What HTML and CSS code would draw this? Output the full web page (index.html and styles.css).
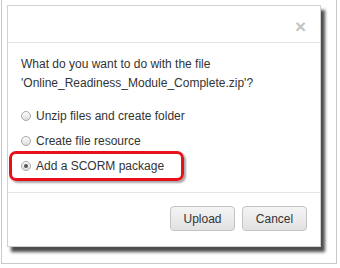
FILE: index.html
```html
<!DOCTYPE html>
<html lang="en">
<head>
  <meta charset="UTF-8">
  <title>Upload file</title>
  <link rel="stylesheet" href="styles.css">
</head>
<body>

  <div class="frame">
    <div class="dialog">
      <div class="dialog-header">
        <span class="close">&times;</span>
      </div>
      <div class="dialog-body">
        <p class="question">What do you want to do with the file<br>'Online_Readiness_Module_Complete.zip'?</p>
        <div class="options">
          <label class="option"><span class="radio"></span>Unzip files and create folder</label>
          <label class="option"><span class="radio"></span>Create file resource</label>
          <label class="option highlighted"><span class="radio checked"></span>Add a SCORM package</label>
        </div>
      </div>
      <div class="dialog-footer">
        <button>Upload</button>
        <button>Cancel</button>
      </div>
    </div>
  </div>

</body>
</html>
```

FILE: styles.css
```css
body {
  margin: 0;
  background: #fff;
  font-family: "Liberation Sans", Arial, sans-serif;
  font-size: 12px;
  color: #333;
}
.frame {
  margin-left: 1px;
  width: 336px;
  height: 264px;
  border: 1px solid #c9c9c9;
  border-top: none;
  padding: 5px 0 0 5px;
  box-sizing: border-box;
  background: #fff;
}
.dialog {
  width: 314px;
  height: 242px;
  box-sizing: border-box;
  border: 1px solid #d0d0d0;
  background: #fff;
  box-shadow: 4px 5px 3px rgba(0,0,0,0.7);
  display: flex;
  flex-direction: column;
}
.dialog-header {
  height: 37px;
  border-bottom: 1px solid #e5e5e5;
  display: flex;
  justify-content: flex-end;
  align-items: center;
  padding: 4px 14px 0 0;
  box-sizing: border-box;
}
.close {
  font-size: 19px;
  font-weight: bold;
  color: #c4c4c4;
  line-height: 1;
}
.dialog-body {
  height: 150px;
  border-bottom: 1px solid #e5e5e5;
  padding: 12px 13px 0;
  box-sizing: border-box;
}
.question {
  margin: 0;
  line-height: 19px;
  font-size: 12px;
}
.options {
  margin-top: 10px;
  display: flex;
  flex-direction: column;
}
.option {
  position: relative;
  height: 25px;
  display: flex;
  align-items: center;
  gap: 5px;
  font-size: 12px;
}
.radio {
  width: 10px;
  height: 10px;
  border: 1px solid #a8a8a8;
  border-radius: 50%;
  box-sizing: border-box;
  background: linear-gradient(#fdfdfd, #dcdcdc);
  display: flex;
  align-items: center;
  justify-content: center;
}
.radio.checked::after {
  content: "";
  width: 4px;
  height: 4px;
  border-radius: 50%;
  background: #555;
}
.highlighted::before {
  content: "";
  position: absolute;
  left: -12px;
  top: -2px;
  width: 175px;
  height: 30px;
  box-sizing: border-box;
  border: 3px solid #e8101a;
  border-radius: 7px;
  box-shadow: 2px 2px 2px rgba(0,0,0,0.35);
}
.dialog-footer {
  flex: 1;
  display: flex;
  justify-content: flex-end;
  align-items: flex-start;
  gap: 7px;
  padding: 13px 13px 0;
}
button {
  width: 65px;
  height: 25px;
  font-family: inherit;
  font-size: 12px;
  color: #333;
  border: 1px solid #c3c3c3;
  border-radius: 4px;
  background: linear-gradient(#f4f4f4, #e2e2e2);
  padding: 0;
  cursor: pointer;
}
```
